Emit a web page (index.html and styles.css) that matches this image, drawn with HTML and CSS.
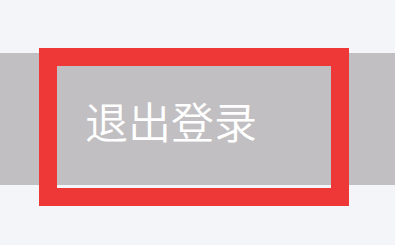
FILE: index.html
```html
<!DOCTYPE html>
<html>
<head>
<meta charset="utf-8">
<link rel="stylesheet" href="styles.css">
</head>
<body>
<div class="page">
  <div class="bar">
    <span class="label">退出登录</span>
  </div>
  <div class="highlight"></div>
</div>
</body>
</html>
```
FILE: styles.css
```css
html, body {
  margin: 0;
  padding: 0;
  background: #f4f5f9;
  width: 395px;
  height: 245px;
  overflow: hidden;
}
.page {
  position: relative;
  width: 395px;
  height: 245px;
  padding-top: 53px;
  box-sizing: border-box;
}
.bar {
  height: 132px;
  background: #c1bfc2;
  display: flex;
  align-items: center;
  padding-left: 85px;
  box-sizing: border-box;
}
.label {
  color: #ffffff;
  font-family: "Noto Sans CJK SC", sans-serif;
  font-weight: 350;
  font-size: 43px;
  line-height: 1;
  margin-top: 2px;
}
.highlight {
  position: absolute;
  left: 39px;
  top: 48px;
  width: 310px;
  height: 158px;
  border: 18px solid #ee3737;
  box-sizing: border-box;
}
```
